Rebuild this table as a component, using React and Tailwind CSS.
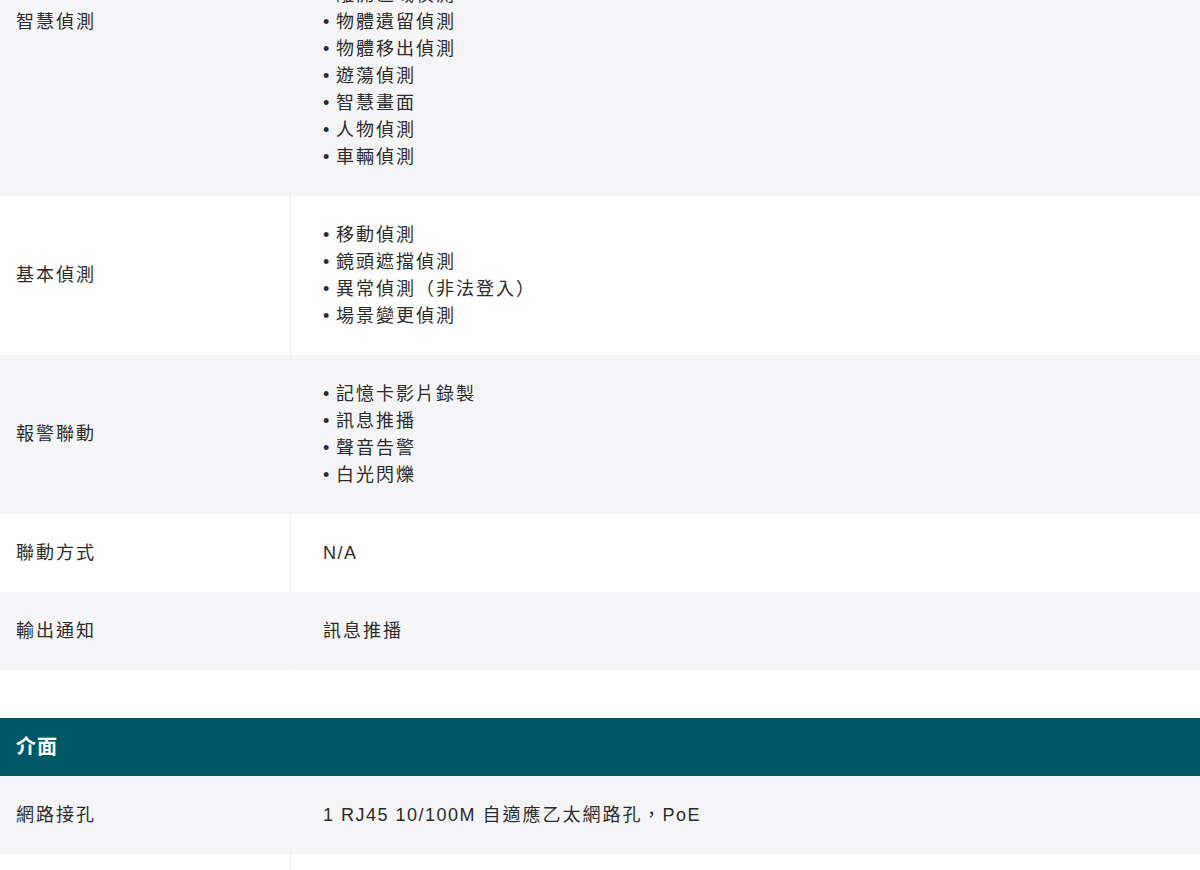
import React from 'react';

const smartItems = [
  '人臉偵測',
  '越界偵測',
  '區域入侵偵測',
  '進入區域偵測',
  '離開區域偵測',
  '物體遺留偵測',
  '物體移出偵測',
  '遊蕩偵測',
  '智慧畫面',
  '人物偵測',
  '車輛偵測',
];

const rows = [
  { label: '智慧偵測', items: smartItems },
  { label: '基本偵測', items: ['移動偵測', '鏡頭遮擋偵測', '異常偵測（非法登入）', '場景變更偵測'] },
  { label: '報警聯動', items: ['記憶卡影片錄製', '訊息推播', '聲音告警', '白光閃爍'] },
  { label: '聯動方式', text: <span className="tracking-[1.5px]">N/A</span> },
  { label: '輸出通知', text: '訊息推播' },
];

const Row = ({ label, items, text, gray }) => (
  <div className={`flex ${gray ? 'bg-[#f5f5f7]' : 'bg-white'}`}>
    <div className="w-[291px] shrink-0 flex items-center pl-4 border-r border-[#f0f0f2]">{label}</div>
    <div className="flex-1 pl-8 py-[25.5px]">
      {items ? (
        <ul>
          {items.map((it) => (
            <li key={it} className="flex">
              <span className="w-[13px] tracking-normal">•</span>
              <span>{it}</span>
            </li>
          ))}
        </ul>
      ) : (
        <div>{text}</div>
      )}
    </div>
  </div>
);

export default function App() {
  return (
    <div
      className="h-[870px] overflow-hidden bg-white text-[18px] leading-[27px] tracking-[2px] text-[#2b2b2b]"
      style={{ fontFamily: '"Liberation Sans", "Noto Sans CJK TC", sans-serif' }}
    >
      <div className="-mt-[152px]">
        {/* 偵測 */}
        <section>
          {rows.map((r, i) => (
            <Row key={r.label} {...r} gray={i % 2 === 0} />
          ))}
        </section>

        <div className="h-[48px]" />

        {/* 介面 */}
        <section>
          <div className="bg-[#005765] h-[58px] flex items-center pl-4 text-white font-bold text-[20px] tracking-[1px]">
            介面
          </div>
          <Row
            label="網路接孔"
            gray
            text={
              <>
                <span className="tracking-[1.5px]">1 RJ45 10/100M </span>
                自適應乙太網路孔，
                <span className="tracking-[1.5px]">PoE</span>
              </>
            }
          />
          <Row label="電源" text={<span className="tracking-[1.5px]">12V DC ±25%，PoE</span>} />
        </section>
      </div>
    </div>
  );
}
